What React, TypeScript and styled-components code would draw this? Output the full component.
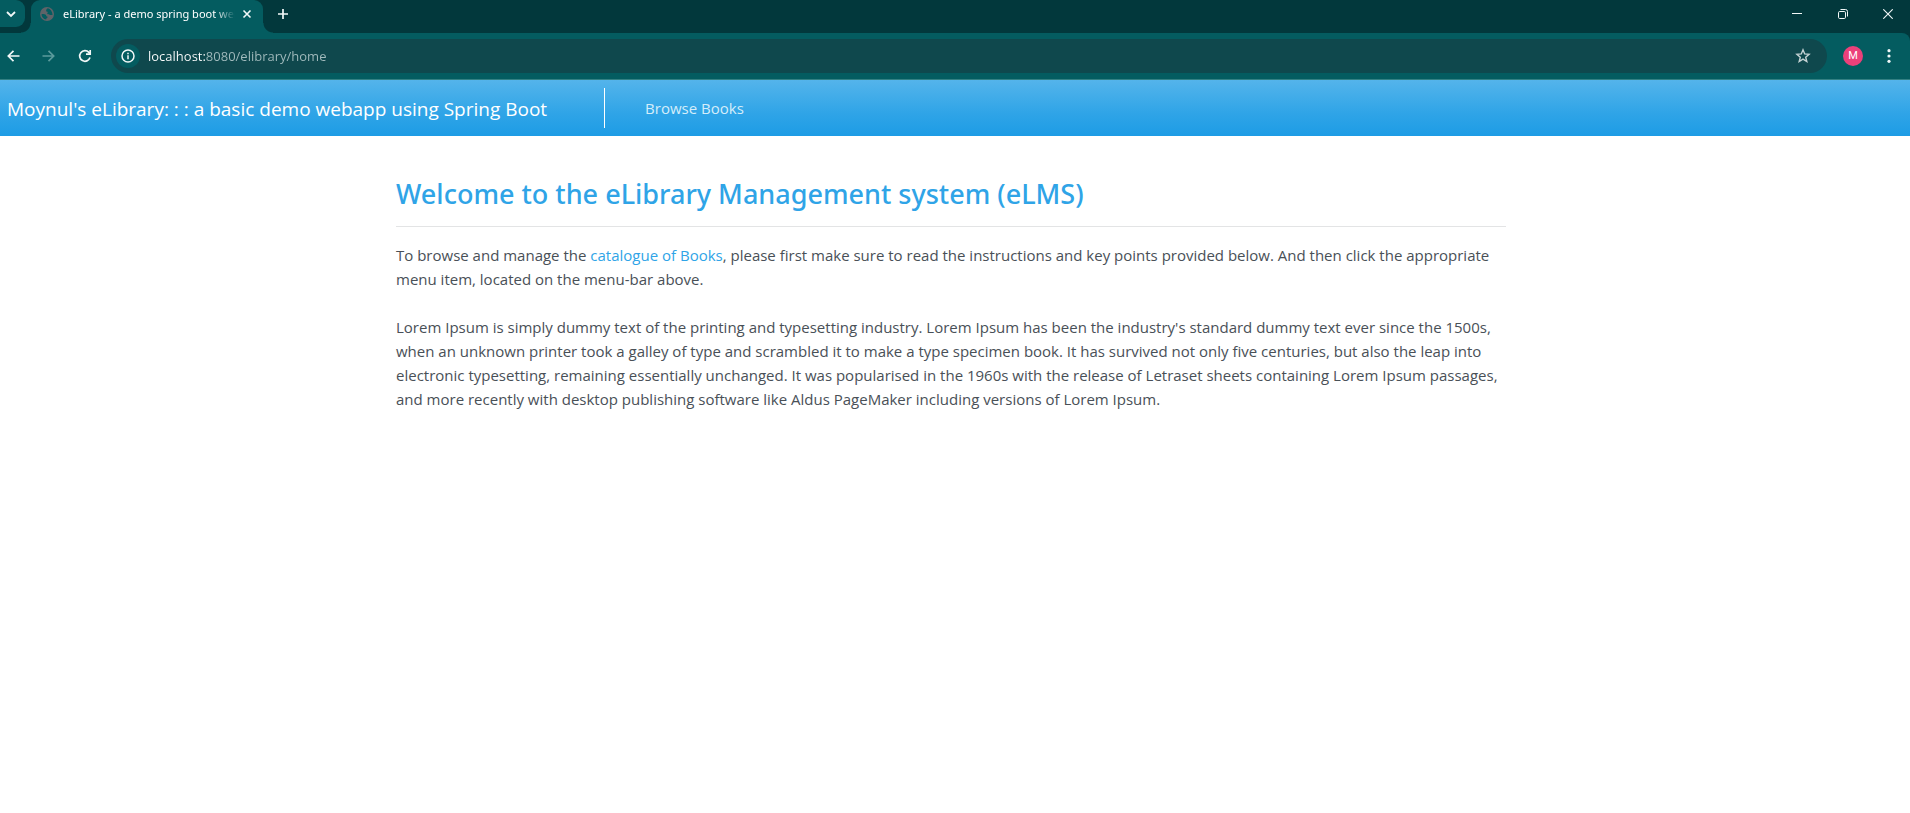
import React from "react";
import styled, { createGlobalStyle } from "styled-components";

const ui = `"Segoe UI", "Open Sans", "Noto Sans", sans-serif`;

const GlobalStyle = createGlobalStyle`
  *, *::before, *::after { box-sizing: border-box; }
  body {
    margin: 0;
    background: #fff;
    color: #495057;
    font: 400 15px/24px ${ui};
  }
`;

const TabStrip = styled.div`
  display: flex;
  align-items: flex-start;
  height: 33px;
  background: #02383c;
  color: #fff;
`;

const IconButton = styled.button<{ $w: number; $h: number; $dim?: boolean }>`
  display: flex;
  flex: none;
  align-items: center;
  justify-content: center;
  width: ${(p) => p.$w}px;
  height: ${(p) => p.$h}px;
  padding: 0;
  border: 0;
  background: none;
  color: ${(p) => (p.$dim ? "#5b9a9c" : "#f2f8f8")};
`;

const TabSearch = styled(IconButton)`
  padding-right: 3px;
  border-radius: 0 9px 9px 0;
  background: #045c60;
`;

const Tab = styled.div`
  position: relative;
  display: flex;
  align-items: center;
  width: 232px;
  height: 33px;
  margin-left: 6px;
  padding: 0 8px 6px 9px;
  border-radius: 9px 9px 0 0;
  background: #045c60;

  &::before,
  &::after {
    content: "";
    position: absolute;
    bottom: 0;
    width: 10px;
    height: 10px;
  }
  &::before {
    right: 100%;
    background: radial-gradient(circle at 0 0, transparent 9px, #045c60 10px);
  }
  &::after {
    left: 100%;
    background: radial-gradient(circle at 100% 0, transparent 9px, #045c60 10px);
  }
`;

const TabTitle = styled.span`
  flex: 1;
  margin: 0 4px 0 9px;
  overflow: hidden;
  white-space: nowrap;
  font-family: "Segoe UI", "Noto Sans", sans-serif;
  font-size: 11px;
  line-height: 16px;
  mask-image: linear-gradient(90deg, #000 calc(100% - 20px), transparent);
`;

const WindowControls = styled.div`
  display: flex;
  margin-left: auto;
`;

const Toolbar = styled.div`
  display: flex;
  align-items: center;
  height: 47px;
  padding-right: 5px;
  border-bottom: 1px solid #338083;
  border-top-right-radius: 8px;
  background: #045c60;
`;

const ToolbarBack = styled.div`
  background: #02383c;
`;

const Omnibox = styled.div`
  display: flex;
  flex: 1;
  align-items: center;
  height: 34px;
  margin: 0 10px 0 9px;
  padding: 0 8px 0 5px;
  border-radius: 17px;
  background: #0f484d;
`;

const SiteInfo = styled(IconButton)`
  border-radius: 50%;
  background: #045c60;
`;

const Address = styled.input`
  flex: 1;
  min-width: 0;
  height: 24px;
  margin-left: 8px;
  padding: 0;
  border: 0;
  outline: 0;
  color: #a3bcbe;
  font: 400 13px/24px ${ui};
  background: linear-gradient(90deg, #fff 58px, #a3bcbe 58px);
  background-clip: text;
  -webkit-text-fill-color: transparent;
`;

const Avatar = styled.button`
  flex: none;
  width: 20px;
  height: 20px;
  margin: 0 10px 0 6px;
  padding: 0;
  border: 0;
  border-radius: 50%;
  background: #ec407a;
  color: #fff;
  font: 400 11px/20px Roboto, sans-serif;
`;

const NavBar = styled.nav`
  display: flex;
  align-items: center;
  height: 56px;
  padding-left: 7px;
  background: linear-gradient(#54b4eb, #2fa4e7 60%, #1d9ce5);
`;

const Brand = styled.a`
  padding-top: 2px;
  color: #fff;
  font-size: 19px;
  line-height: 30px;
  text-decoration: none;
  white-space: nowrap;
`;

const NavItem = styled.div`
  display: flex;
  align-items: center;
  height: 40px;
  margin-left: 57px;
  padding-left: 40px;
  border-left: 1px solid #fff;
`;

const NavLink = styled.a`
  color: #d5edfa;
  text-decoration: none;
`;

const Main = styled.main`
  max-width: 1140px;
  margin: 0 auto;
  padding: 40px 19px 24px 11px;
`;

const Heading = styled.h1`
  margin: 0;
  padding-bottom: 14px;
  border-bottom: 1px solid #e3e4e5;
  color: #2fa4e7;
  font-family: "Segoe UI", "Noto Sans", sans-serif;
  font-size: 27px;
  font-weight: 500;
  line-height: 36px;
`;

const Paragraph = styled.p`
  margin: 16px 0 0;

  & + & {
    margin-top: 24px;
  }
`;

const TextLink = styled.a`
  color: #2fa4e7;
  text-decoration: none;
`;

const stroke = { fill: "none", stroke: "currentColor" } as const;

export default function App() {
  return (
    <>
      <GlobalStyle />
      <header>
        <TabStrip>
          <TabSearch $w={25} $h={27} aria-label="Search tabs">
            <svg width="10" height="8" viewBox="0 0 10 8" {...stroke} strokeWidth="1.8"><path d="M1 2l4 4 4-4" /></svg>
          </TabSearch>
          <Tab>
            <svg width="14" height="14" viewBox="0 0 14 14">
              <circle cx="7" cy="7" r="7" fill="#5f6368" />
              <path d="M7.600 1.300C6.500 2.200 6 3 6.200 3.900c.2.800 1.300.5 1.500 1.300.2.900-.9 1-.3 1.800.5.700 1.600.2 2.300.7.800.5 1.500.3 2.800.2C12.300 4.500 10.500 1.800 7.600 1.300zM1.500 7.200c1.600-.5 3.300-.3 4.200.5.700.7.300 1.400 1.300 1.700 1 .3.800 1.100.1 1.400-.8.300-.4 1-1 1.700C3.500 12 1.700 10 1.500 7.200z" fill="#045c60" />
            </svg>
            <TabTitle>eLibrary - a demo spring boot webapp</TabTitle>
            <IconButton $w={16} $h={16} aria-label="Close tab">
              <svg width="10" height="10" viewBox="0 0 10 10" {...stroke} strokeWidth="1.6"><path d="M1.500 1.500l7 7M8.500 1.500l-7 7" /></svg>
            </IconButton>
          </Tab>
          <IconButton $w={40} $h={27} aria-label="New tab">
            <svg width="12" height="12" viewBox="0 0 12 12" {...stroke} strokeWidth="1.7"><path d="M6 1v10M1 6h10" /></svg>
          </IconButton>
          <WindowControls>
            <IconButton $w={46} $h={27} aria-label="Minimize">
              <svg width="10" height="10" viewBox="0 0 10 10" {...stroke}><path d="M0 4.500h10" /></svg>
            </IconButton>
            <IconButton $w={46} $h={27} aria-label="Restore">
              <svg width="10" height="10" viewBox="0 0 10 10" {...stroke}><rect x=".5" y="2.500" width="7" height="7" rx="1.200" /><path d="M2.500 .5h5a2 2 0 0 1 2 2v5" /></svg>
            </IconButton>
            <IconButton $w={44} $h={27} aria-label="Close">
              <svg width="10" height="10" viewBox="0 0 10 10" {...stroke} strokeWidth="1.1"><path d="M.3 .3l9.400 9.400M9.700 .3L.3 9.700" /></svg>
            </IconButton>
          </WindowControls>
        </TabStrip>
        <ToolbarBack>
          <Toolbar>
            <IconButton $w={28} $h={34} aria-label="Back">
              <svg width="14" height="12" viewBox="0 0 14 12" {...stroke} strokeWidth="1.7"><path d="M6.500 .8L1.300 6l5.200 5.200M1.300 6H12.500" /></svg>
            </IconButton>
            <IconButton $w={40} $h={34} $dim aria-label="Forward">
              <svg width="14" height="12" viewBox="0 0 14 12" {...stroke} strokeWidth="1.7"><path d="M7.500 .8l5.200 5.200-5.200 5.200M12.700 6H1.500" /></svg>
            </IconButton>
            <IconButton $w={34} $h={34} aria-label="Reload">
              <svg width="14" height="14" viewBox="0 0 14 14" {...stroke} strokeWidth="1.7"><path d="M12 8.600A5.300 5.300 0 1 1 10.900 3.400L12 4.600" /><path d="M12.200 1v4.200H8" /></svg>
            </IconButton>
            <Omnibox>
              <SiteInfo $w={24} $h={24} aria-label="View site information">
                <svg width="14" height="14" viewBox="0 0 14 14" {...stroke} strokeWidth="1.5"><circle cx="7" cy="7" r="6" /><path d="M7 6.200v4M7 3.700v1.500" /></svg>
              </SiteInfo>
              <Address aria-label="Address" defaultValue="localhost:8080/elibrary/home" />
              <IconButton $w={32} $h={24} aria-label="Bookmark this tab">
                <svg width="16" height="16" viewBox="0 0 16 16" fill="none" stroke="#c5d3d4" strokeWidth="1.4"><path d="M8 1.800l1.700 4.100 4.400.4-3.400 2.900 1.100 4.400L8 11.200l-3.800 2.400 1.100-4.400L1.900 6.300l4.400-.4z" /></svg>
              </IconButton>
            </Omnibox>
            <Avatar aria-label="Profile">M</Avatar>
            <IconButton $w={32} $h={34} aria-label="Browser menu">
              <svg width="4" height="14" viewBox="0 0 4 14" fill="currentColor"><circle cx="2" cy="1.700" r="1.600" /><circle cx="2" cy="7" r="1.600" /><circle cx="2" cy="12.300" r="1.600" /></svg>
            </IconButton>
          </Toolbar>
        </ToolbarBack>
      </header>
      <NavBar>
        <Brand href="#home">Moynul's eLibrary: : : a basic demo webapp using Spring Boot</Brand>
        <NavItem>
          <NavLink href="#books">Browse Books</NavLink>
        </NavItem>
      </NavBar>
      <Main>
        <Heading>Welcome to the eLibrary Management system (eLMS)</Heading>
        <Paragraph>
          To browse and manage the <TextLink href="#books">catalogue of Books</TextLink>, please first make sure to
          read the instructions and key points provided below. And then click the appropriate menu item, located on
          the menu-bar above.
        </Paragraph>
        <Paragraph>
          Lorem Ipsum is simply dummy text of the printing and typesetting industry. Lorem Ipsum has been the
          industry's standard dummy text ever since the 1500s, when an unknown printer took a galley of type and
          scrambled it to make a type specimen book. It has survived not only five centuries, but also the leap into
          electronic typesetting, remaining essentially unchanged. It was popularised in the 1960s with the release of
          Letraset sheets containing Lorem Ipsum passages, and more recently with desktop publishing software like
          Aldus PageMaker including versions of Lorem Ipsum.
        </Paragraph>
      </Main>
    </>
  );
}
